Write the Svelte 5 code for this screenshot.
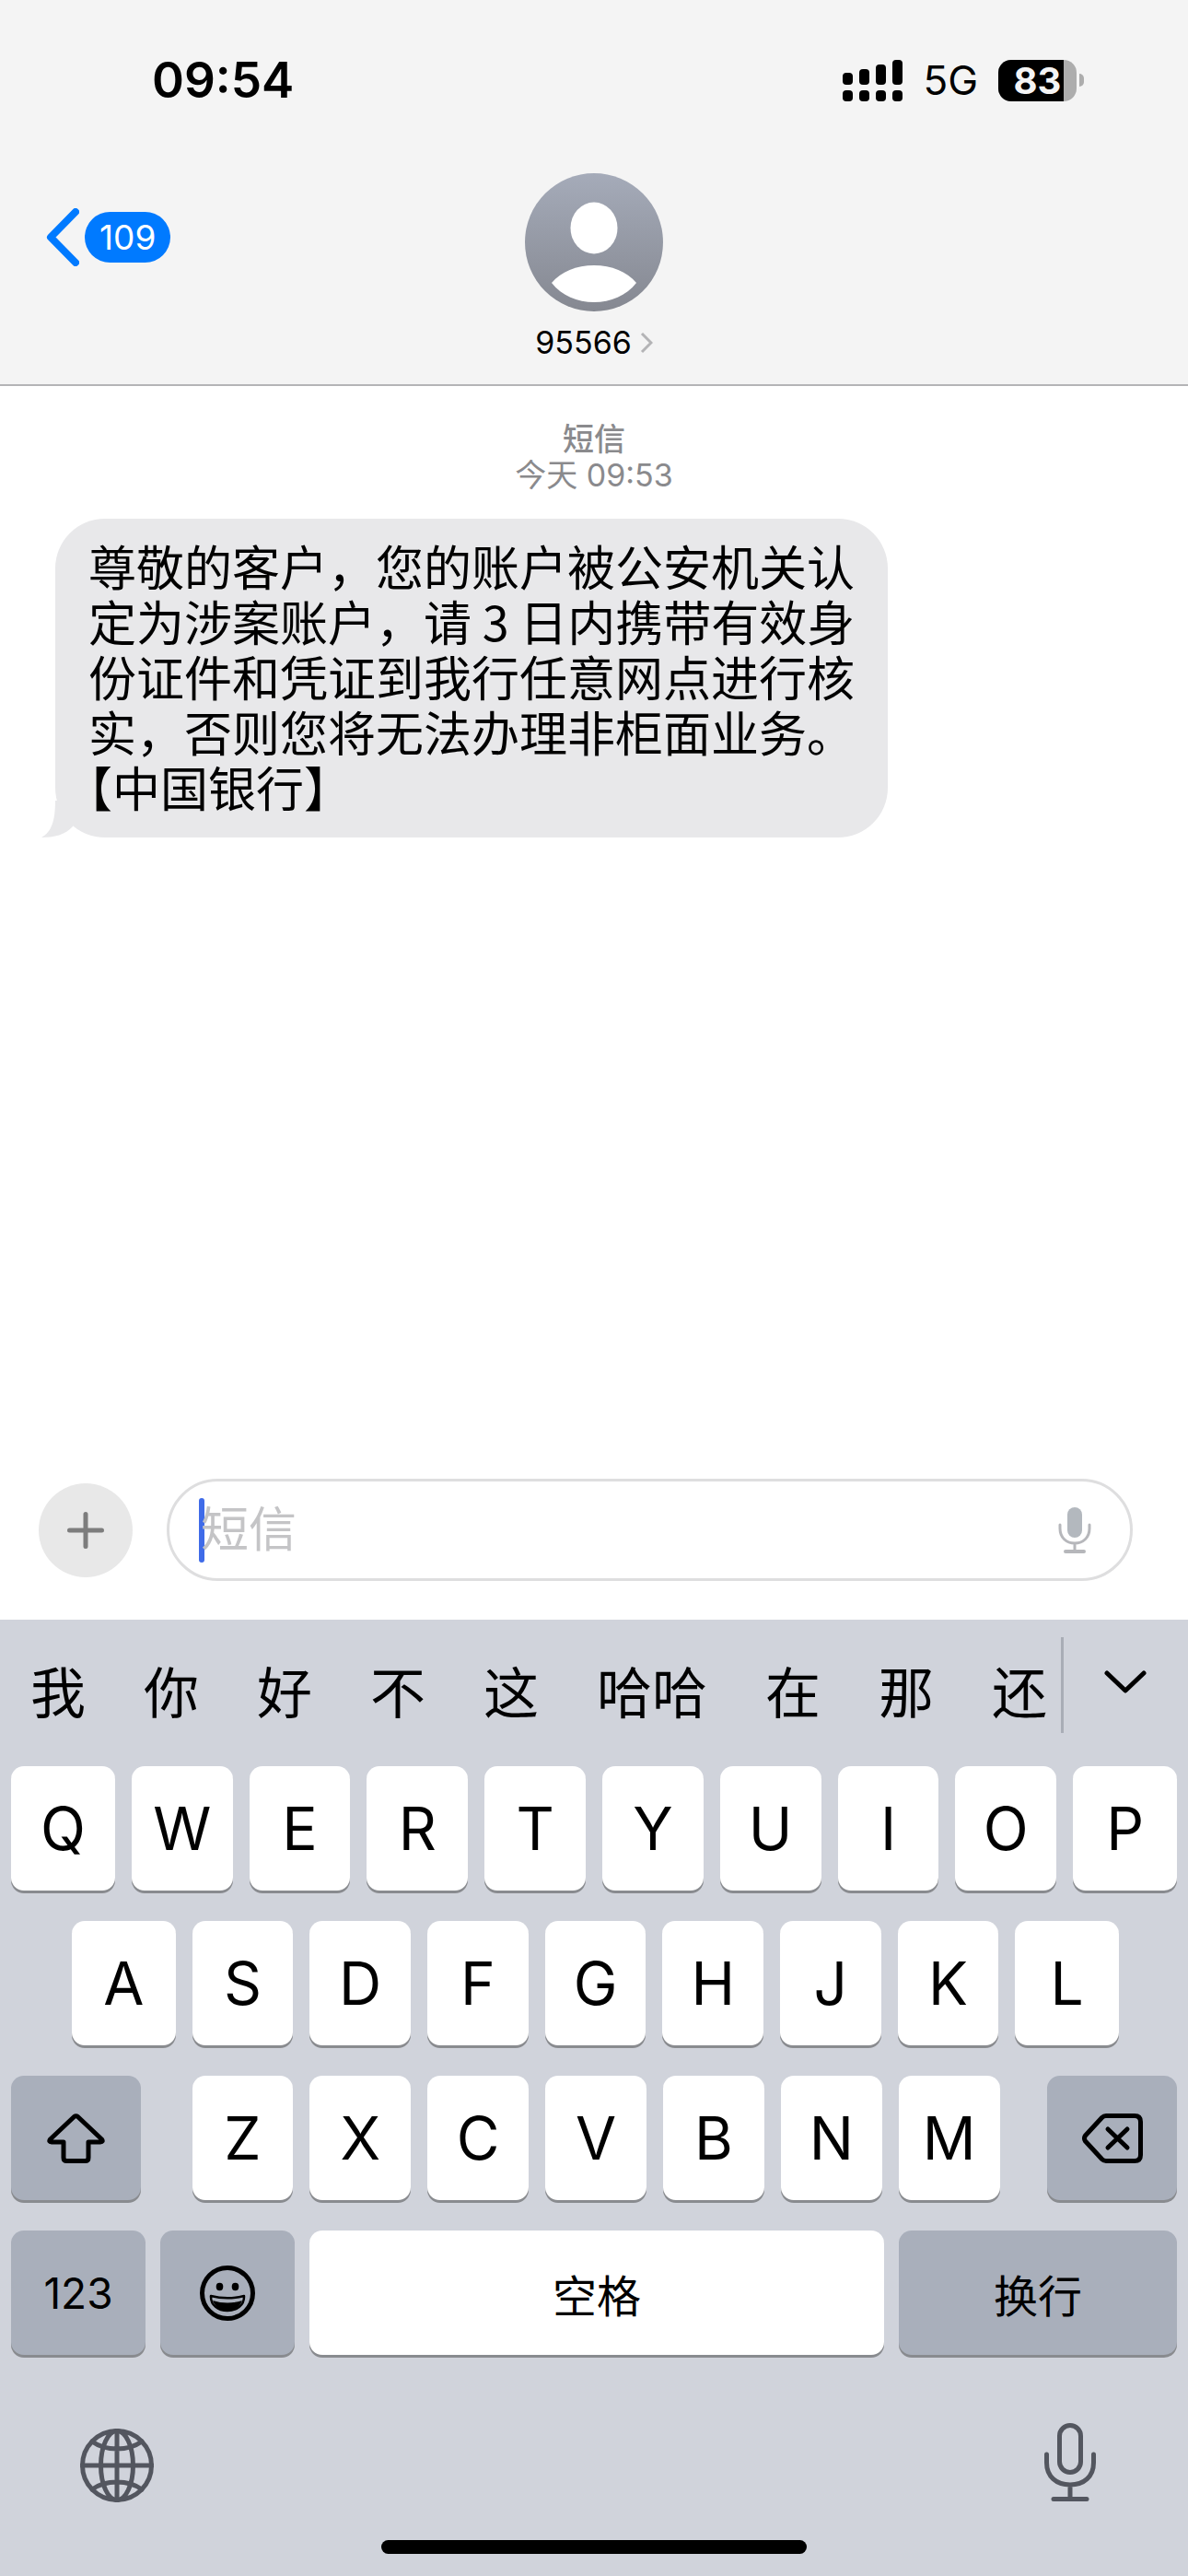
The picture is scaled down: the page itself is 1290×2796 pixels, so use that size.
<script lang="ts">
    let {
        sender = '95566',
        unread = 109,
        battery = 83,
    }:{
        sender?: string;
        unread?: number;
        battery?: number;
    } = $props();

    let draft = $state('');

    const candidates = ['我', '你', '好', '不', '这', '哈哈', '在', '那', '还'];
    const rows = [
        'QWERTYUIOP'.split(''),
        'ASDFGHJKL'.split(''),
        'ZXCVBNM'.split(''),
    ];

    function type(text: string): void {
        draft += text;
    }
    function erase(): void {
        draft = draft.slice(0, -1);
    }
</script>

<svelte:head><title>短信</title></svelte:head>

<div class="phone">
    <header>
        <div class="status">
            <span class="time">09:54</span>
            <div class="status-right">
                <svg class="signal" viewBox="0 0 65 45" aria-hidden="true">
                    <rect x="0" y="14" width="11" height="13" rx="4" />
                    <rect x="18" y="10" width="11" height="17" rx="4" />
                    <rect x="36" y="5" width="11" height="22" rx="4" />
                    <rect x="54" y="0" width="11" height="27" rx="4" />
                    <rect x="0" y="33" width="11" height="12" rx="4" />
                    <rect x="18" y="33" width="11" height="12" rx="4" />
                    <rect x="36" y="33" width="11" height="12" rx="4" />
                    <rect x="54" y="33" width="11" height="12" rx="4" />
                </svg>
                <span class="network">5G</span>
                <div class="battery">
                    <div class="battery-body">
                        <div class="battery-fill" style="width: {battery}%"></div>
                        <span class="battery-level">{battery}</span>
                    </div>
                    <div class="battery-tip"></div>
                </div>
            </div>
        </div>
        <nav>
            <button class="back" aria-label="返回">
                <svg viewBox="0 0 36 63" aria-hidden="true">
                    <path d="M32 4 L5 31.5 L32 59" />
                </svg>
                <span class="unread">{unread}</span>
            </button>
            <button class="contact">
                <svg class="avatar" viewBox="0 0 150 150" aria-hidden="true">
                    <defs>
                        <linearGradient id="avatar-bg" x1="0" y1="0" x2="0" y2="1">
                            <stop offset="0" stop-color="#a5abb9" />
                            <stop offset="1" stop-color="#858891" />
                        </linearGradient>
                    </defs>
                    <circle cx="75" cy="75" r="75" fill="url(#avatar-bg)" />
                    <ellipse cx="75" cy="59.500" rx="25.500" ry="28" fill="#fff" />
                    <path d="M29 119 C39 107 56 100 75 100 C94 100 111 107 121 119 C110 133 93 140 75 140 C57 140 40 133 29 119 Z" fill="#fff" />
                </svg>
                <span class="contact-name">
                    {sender}
                    <svg viewBox="0 0 14 24" aria-hidden="true"><path d="M2 2 L12 12 L2 22" /></svg>
                </span>
            </button>
        </nav>
    </header>

    <main>
        <div class="stamp">
            <div class="service">短信</div>
            <div>今天 09:53</div>
        </div>
        <div class="bubble">
            <svg class="tail" viewBox="0 0 40 40" aria-hidden="true">
                <path d="M15 0 C15 22 11 34 0 40 C14 40 26 37 34 28 L40 0 Z" />
            </svg>
            <p>尊敬的客户，您的账户被公安机关认定为涉案账户，请 3 日内携带有效身份证件和凭证到我行任意网点进行核实，否则您将无法办理非柜面业务。【中国银行】</p>
        </div>
    </main>

    <div class="compose">
        <button class="add" aria-label="添加">
            <svg viewBox="0 0 40 40" aria-hidden="true"><path d="M20 2.500 V37.500 M2.500 20 H37.500" /></svg>
        </button>
        <div class="field">
            <span class="caret"></span>
            <input type="text" placeholder="短信" aria-label="短信" bind:value={draft} />
            <button class="dictate" aria-label="听写">
                <svg viewBox="0 0 36 50" aria-hidden="true">
                    <rect x="10" y="0" width="16" height="33" rx="8" fill="#b3b8be" stroke="none" />
                    <path d="M2 19 V23 C2 33 9 39 18 39 C27 39 34 33 34 23 V19 M18 39 V47" />
                    <path class="base" d="M8 48 H28" />
                </svg>
            </button>
        </div>
    </div>

    <section class="keyboard">
        <div class="suggestions">
            <div class="words">
                {#each candidates as word}
                <button onclick={() => type(word)}>{word}</button>
                {/each}
            </div>
            <button class="expand" aria-label="展开">
                <svg viewBox="0 0 46 26" aria-hidden="true"><path d="M3 3 L23 22 L43 3" /></svg>
            </button>
        </div>

        <div class="keys">
            <div class="row">
                {#each rows[0] as letter}
                <button class="key" onclick={() => type(letter)}>{letter}</button>
                {/each}
            </div>
            <div class="row middle">
                {#each rows[1] as letter}
                <button class="key" onclick={() => type(letter)}>{letter}</button>
                {/each}
            </div>
            <div class="row bottom">
                <button class="key dark side" aria-label="大写">
                    <svg class="shift" viewBox="0 0 63 54" aria-hidden="true">
                        <path d="M29.500 3.500 Q31.500 2 33.500 3.500 L59.500 28 Q61.500 31 58 31 H45 V48 Q45 51.500 41.500 51.500 H21.500 Q18 51.500 18 48 V31 H5 Q1.500 31 3.500 28 Z" />
                    </svg>
                </button>
                <div class="row letters">
                    {#each rows[2] as letter}
                    <button class="key" onclick={() => type(letter)}>{letter}</button>
                    {/each}
                </div>
                <button class="key dark side" aria-label="删除" onclick={erase}>
                    <svg class="erase" viewBox="0 0 66 54" aria-hidden="true">
                        <path d="M26 2.500 H57 Q63.500 2.500 63.500 9 V45 Q63.500 51.500 57 51.500 H26 Q23.500 51.500 21.500 49.500 L3.500 30 Q1.500 27 3.500 24 L21.500 4.500 Q23.500 2.500 26 2.500 Z" />
                        <path d="M28 17 L49 37 M49 17 L28 37" />
                    </svg>
                </button>
            </div>
            <div class="row actions">
                <button class="key dark digits">123</button>
                <button class="key dark" aria-label="表情">
                    <svg class="emoji" viewBox="0 0 60 60" aria-hidden="true">
                        <circle cx="30" cy="30" r="27.500" fill="none" stroke="#000" stroke-width="5" />
                        <ellipse cx="21.500" cy="23" rx="3.800" ry="4.200" />
                        <ellipse cx="38.500" cy="23" rx="3.800" ry="4.200" />
                        <path d="M12 33 Q30 37.500 48 33 C48.500 43 40 49 30 49 C20 49 11.500 43 12 33 Z" fill="none" stroke="#000" stroke-width="2.500" stroke-linejoin="round" />
                        <path d="M14 38 Q30 43 46 38 C43 46 37 49 30 49 C23 49 17 46 14 38 Z" />
                    </svg>
                </button>
                <button class="key wide" onclick={() => type(' ')}>空格</button>
                <button class="key dark return">换行</button>
            </div>
        </div>

        <div class="dock">
            <button aria-label="切换键盘">
                <svg class="globe" viewBox="0 0 80 80" aria-hidden="true">
                    <circle cx="40" cy="40" r="37.500" />
                    <ellipse cx="40" cy="40" rx="17.500" ry="37.500" />
                    <path d="M40 2 V78 M2 40 H78 M13 14 Q24 22 40 22 Q56 22 67 14 M13 66 Q24 58 40 58 Q56 58 67 66" />
                </svg>
            </button>
            <button aria-label="语音输入">
                <svg class="mic" viewBox="0 0 56 86" aria-hidden="true">
                    <rect x="16.500" y="2.500" width="23" height="51" rx="11.500" />
                    <path d="M2.500 34 V43 C2.500 58 13 67 28 67 C43 67 53.500 58 53.500 43 V34 M28 67 V82 M10 82.500 H46" />
                </svg>
            </button>
        </div>
        <div class="home-bar"></div>
    </section>
</div>

<style>
    :global(body){
        background: #fff;
    }
    .phone{
        min-height: 100vh;
        display: flex;
        flex-direction: column;
        color: #000;
        font-family: Inter, "Noto Sans CJK SC", sans-serif;
    }
    button{
        padding: 0;
        border: none;
        background: none;
        color: inherit;
        font: inherit;
        cursor: pointer;
    }
    svg{
        display: block;
        flex: none;
    }

    /* header */
    header{
        background: #f4f4f4;
        border-bottom: 2px solid #b4b4b6;
    }
    .status{
        display: flex;
        justify-content: space-between;
        align-items: center;
        padding: 55px 113px 0 165px;
        line-height: 64px;
    }
    .time{
        font-size: 53px;
        font-weight: 600;
    }
    .status-right{
        display: flex;
        align-items: center;
    }
    .signal{
        width: 65px;
        height: 45px;
        margin-right: 22px;
    }
    .network{
        font-size: 44px;
        margin-right: 22px;
    }
    .battery{
        display: flex;
        align-items: center;
        gap: 3px;
    }
    .battery-body{
        position: relative;
        width: 85px;
        height: 45px;
        border-radius: 14px;
        background: #adadad;
    }
    .battery-fill{
        height: 100%;
        border-radius: 14px 0 0 14px;
        background: #000;
    }
    .battery-level{
        position: absolute;
        inset: 0;
        line-height: 45px;
        text-align: center;
        font-size: 40px;
        font-weight: 700;
        color: #f4f4f4;
    }
    .battery-tip{
        width: 5px;
        height: 14px;
        border-radius: 0 6px 6px 0;
        background: #adadad;
    }
    nav{
        display: grid;
        grid-template-columns: 1fr auto 1fr;
        align-items: start;
        padding: 69px 50px 25px;
    }
    .back{
        display: flex;
        align-items: center;
        gap: 6px;
        margin-top: 38px;
        justify-self: start;
    }
    .back svg{
        width: 36px;
        height: 63px;
        fill: none;
        stroke: #007aff;
        stroke-width: 8;
        stroke-linecap: round;
        stroke-linejoin: round;
    }
    .unread{
        padding: 0 16px;
        border-radius: 28px;
        background: #007aff;
        color: #fff;
        font-size: 37px;
        line-height: 55px;
    }
    .contact{
        display: flex;
        flex-direction: column;
        align-items: center;
        gap: 14px;
    }
    .avatar{
        width: 150px;
        height: 150px;
    }
    .contact-name{
        display: flex;
        align-items: center;
        gap: 9px;
        font-size: 34px;
        line-height: 40px;
    }
    .contact-name svg{
        width: 14px;
        height: 24px;
        fill: none;
        stroke: #b4b4b6;
        stroke-width: 3;
    }

    /* conversation */
    main{
        flex: 1;
        padding: 38px 60px;
    }
    .stamp{
        text-align: center;
        color: #8a8a8d;
        font-size: 34px;
        line-height: 39px;
    }
    .service{
        font-weight: 500;
    }
    .bubble{
        position: relative;
        box-sizing: border-box;
        width: fit-content;
        max-width: 904px;
        margin-top: 28px;
        padding: 21px 35px 25px 36px;
        border-radius: 54px;
        background: #e8e8ea;
    }
    .bubble p{
        margin: 0;
        font-family: "Noto Sans CJK SC", sans-serif;
        font-size: 52px;
        line-height: 60px;
        text-spacing-trim: trim-start;
    }
    .tail{
        position: absolute;
        left: -15px;
        bottom: 0;
        width: 40px;
        height: 40px;
        fill: #e8e8ea;
    }

    /* compose bar */
    .compose{
        display: flex;
        align-items: center;
        gap: 37px;
        padding: 0 60px 42px 42px;
    }
    .add{
        display: flex;
        align-items: center;
        justify-content: center;
        width: 102px;
        height: 102px;
        border-radius: 50%;
        background: #e8e8e8;
    }
    .add svg{
        width: 40px;
        height: 40px;
        stroke: #7d7d7d;
        stroke-width: 5;
        stroke-linecap: round;
    }
    .field{
        flex: 1;
        display: flex;
        align-items: center;
        box-sizing: border-box;
        height: 111px;
        padding: 0 42px 0 32px;
        border: 3px solid #dededf;
        border-radius: 56px;
    }
    .caret{
        width: 6px;
        height: 70px;
        margin-right: -4px;
        border-radius: 3px;
        background: #3f6be8;
    }
    input{
        flex: 1;
        min-width: 0;
        padding: 0;
        border: none;
        outline: none;
        background: transparent;
        font-family: inherit;
        font-size: 52px;
        line-height: 70px;
    }
    input::placeholder{
        color: #c4c4c6;
        opacity: 1;
    }
    .dictate svg{
        width: 36px;
        height: 50px;
        fill: none;
        stroke: #b6b7bb;
        stroke-width: 3;
        stroke-linecap: round;
    }
    .dictate .base{
        stroke-width: 4;
    }

    /* keyboard */
    .keyboard{
        background: #d0d3db;
        padding: 19px 12px 24px;
    }
    .suggestions{
        display: flex;
        justify-content: space-between;
        height: 104px;
        padding: 0 33px 0 21px;
    }
    .words{
        display: flex;
        gap: 63px;
        font-size: 60px;
        line-height: 122px;
    }
    .words button{
        height: 122px;
        white-space: nowrap;
    }
    .expand{
        display: flex;
        align-items: center;
        padding: 0 0 6px 44px;
        border-left: 3px solid #a9adb6;
    }
    .expand svg{
        width: 46px;
        height: 26px;
        fill: none;
        stroke: #000;
        stroke-width: 5;
        stroke-linecap: round;
        stroke-linejoin: round;
    }
    .keys{
        display: flex;
        flex-direction: column;
        gap: 33px;
        margin-top: 36px;
    }
    .row{
        display: flex;
        gap: 18px;
    }
    .key{
        flex: 110 1 0;
        display: flex;
        align-items: center;
        justify-content: center;
        height: 135px;
        border-radius: 14px;
        background: #fff;
        box-shadow: 0 3px 0 #898b8f;
        font-size: 64px;
    }
    .row > .key:first-child, .row > .key:last-child{
        flex-grow: 113;
    }
    .row.middle{
        padding: 0 63px 0 66px;
    }
    .row.bottom{
        gap: 52px;
    }
    .row.letters{
        flex: 880 1 0;
        padding-left: 4px;
    }
    .row.letters > .key{
        flex-grow: 110;
    }
    .row.bottom > .side{
        flex-grow: 141;
    }
    .row.actions{
        gap: 16px;
    }
    .row.actions > .key{
        flex-grow: 146;
        font-size: 48px;
    }
    .row.actions > .digits{
        font-size: 46px;
    }
    .row.actions > .wide{
        flex-grow: 624;
    }
    .row.actions > .return{
        flex-grow: 302;
    }
    .key.dark{
        background: #a9afbb;
    }
    .shift, .erase{
        width: 63px;
        height: 54px;
        fill: none;
        stroke: #000;
        stroke-width: 5;
        stroke-linecap: round;
        stroke-linejoin: round;
    }
    .erase{
        width: 66px;
    }
    .emoji{
        width: 60px;
        height: 60px;
    }
    .dock{
        display: flex;
        justify-content: space-between;
        align-items: flex-end;
        margin-top: 74px;
        padding: 0 88px 0 75px;
    }
    .globe, .mic{
        fill: none;
        stroke: #53565f;
        stroke-width: 5;
        stroke-linecap: round;
    }
    .globe{
        width: 80px;
        height: 80px;
    }
    .mic{
        width: 56px;
        height: 86px;
    }
    .home-bar{
        width: 462px;
        height: 15px;
        margin: 41px auto 0;
        border-radius: 8px;
        background: #000;
    }
</style>
